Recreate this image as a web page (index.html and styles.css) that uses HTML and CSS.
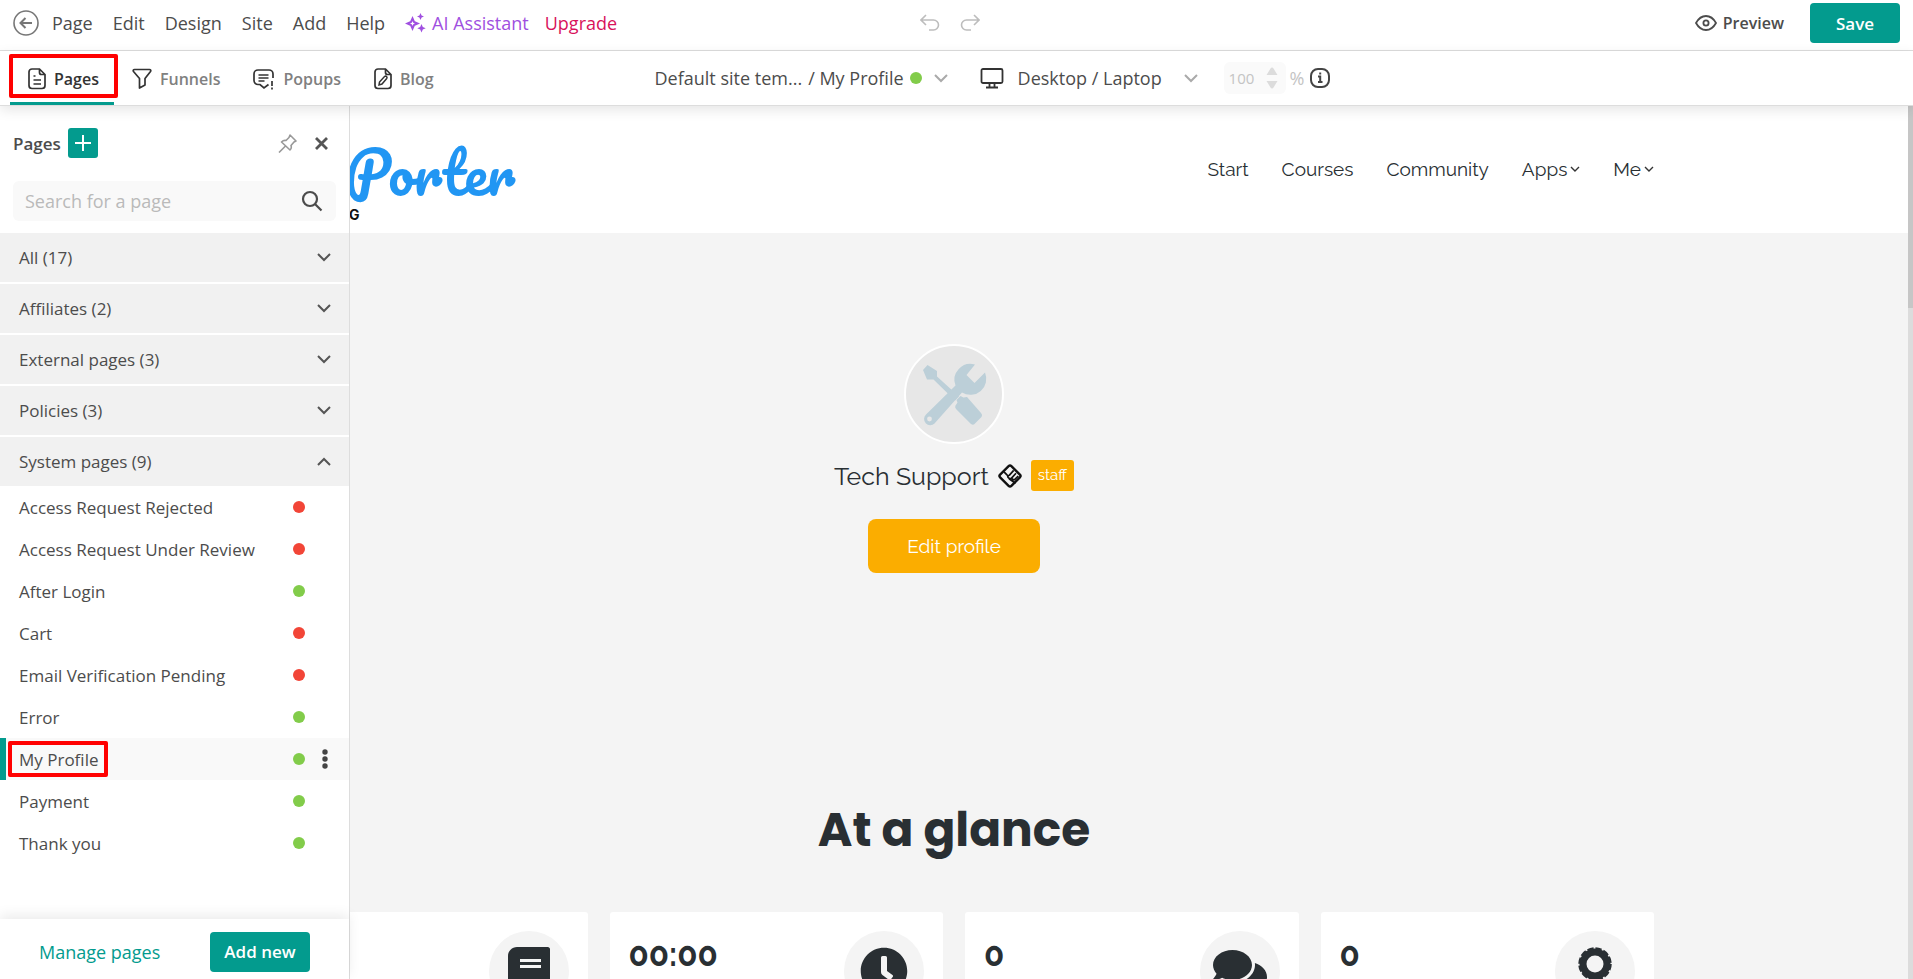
FILE: index.html
```html
<!DOCTYPE html>
<html lang="en">
<head>
  <meta charset="UTF-8" />
  <meta name="viewport" content="width=device-width, initial-scale=1.0"/>
  <title>Site Builder - My Profile</title>
  <link rel="stylesheet" href="styles.css">
</head>
<body>

  <header class="topbar">
    <nav class="menu" aria-label="Main menu">
      <button class="back-btn" aria-label="Back">
        <svg width="26" height="26" viewBox="0 0 26 26" fill="none" stroke="#777" stroke-width="2"><circle cx="13" cy="13" r="12" stroke-width="1.6"/><path d="M19 13H8M12.500 8L7.500 13l5 5"/></svg>
      </button>
      <button>Page</button>
      <button>Edit</button>
      <button>Design</button>
      <button>Site</button>
      <button>Add</button>
      <button>Help</button>
      <button class="ai-btn">
        <svg width="21" height="20" viewBox="0 0 21 20" fill="#a04fe0"><path d="M7.500 5.500L9 9l3.500 1.500L9 12l-1.500 3.500L6 12l-3.500-1.500L6 9z" fill="none" stroke="#a04fe0" stroke-width="2"/><path d="M15.500 0l1.100 2.400L19 3.500l-2.400 1.100L15.500 7l-1.100-2.400L12 3.500l2.400-1.100zM16.500 11l1.300 2.900 2.900 1.300-2.900 1.300-1.300 2.900-1.300-2.900-2.900-1.300 2.900-1.300z"/></svg>
        AI Assistant
      </button>
      <a href="#" class="upgrade">Upgrade</a>
    </nav>
    <div class="history">
      <button aria-label="Undo" disabled>
        <svg width="20" height="18" viewBox="0 0 20 18" fill="none" stroke="#bdbdbd" stroke-width="1.600"><path d="M6 1L1 6l5 5M1 6h12.500a5 5 0 0 1 0 10H9"/></svg>
      </button>
      <button aria-label="Redo" disabled>
        <svg width="20" height="18" viewBox="0 0 20 18" fill="none" stroke="#bdbdbd" stroke-width="1.600"><path d="M14 1l5 5-5 5M19 6H6.500a5 5 0 0 0 0 10H11"/></svg>
      </button>
    </div>
    <div class="actions">
      <button class="preview-btn">
        <svg width="22" height="16" viewBox="0 0 22 16" fill="none" stroke="#4c4c4c" stroke-width="1.800"><path d="M1 8c2.500-4.500 6-7 10-7s7.500 2.500 10 7c-2.500 4.500-6 7-10 7S3.500 12.500 1 8z"/><circle cx="11" cy="8" r="2.600"/></svg>
        Preview
      </button>
      <button class="btn save-btn">Save</button>
    </div>
  </header>

  <div class="toolbar">
    <nav class="tabs" aria-label="Panels">
      <button class="tab active marked">
        <svg width="18" height="22" viewBox="0 0 18 22" fill="none" stroke="#333" stroke-width="1.700"><path d="M11.500 1H4a3 3 0 0 0-3 3v13.500a3 3 0 0 0 3 3h10a3 3 0 0 0 3-3V6.500zM11.500 1v3.500a2 2 0 0 0 2 2H17M5.500 8h2M5.500 12h7.500M5.500 16h7.500"/></svg>
        Pages
      </button>
      <button class="tab">
        <svg width="20" height="21" viewBox="0 0 20 21" fill="none" stroke="#333" stroke-width="1.700" stroke-linejoin="round"><path d="M2.500 1.500h15c1.200 0 1.600 1 1 2l-5.500 7v6.500l-5.500 3V10.500l-6-7c-.6-1-.2-2 1-2z"/></svg>
        Funnels
      </button>
      <button class="tab">
        <svg width="22" height="22" viewBox="0 0 22 22" fill="none" stroke="#333" stroke-width="1.700"><path d="M15.500 16.500l-4.500 3.500-4-3.500H5a4 4 0 0 1-4-4V6a4 4 0 0 1 4-4h11a4 4 0 0 1 4 4v4M5.500 7h10M5.500 10h10M5.500 13h6M19 13v5M19 19.500v2"/></svg>
        Popups
      </button>
      <button class="tab">
        <svg width="18" height="22" viewBox="0 0 18 22" fill="none" stroke="#333" stroke-width="1.700"><path d="M11.500 1H4a3 3 0 0 0-3 3v13.500a3 3 0 0 0 3 3h10a3 3 0 0 0 3-3V6.500zM11.500 1v3.500a2 2 0 0 0 2 2H17"/><path d="M5 17l.5-3 5-5.500c1.500-1 3.200.5 2.200 2L8 16z" stroke-width="1.500"/></svg>
        Blog
      </button>
    </nav>

    <div class="view-controls">
      <button class="page-picker">
        <span>Default site tem...</span>
        <span>/ My Profile</span>
        <span class="dot green"></span>
        <svg class="chevron" width="14" height="9" viewBox="0 0 14 9" fill="none" stroke="#aaa" stroke-width="2"><path d="M1 1l6 6 6-6"/></svg>
      </button>
      <label class="device">
        <svg width="24" height="21" viewBox="0 0 24 21" fill="none" stroke="#333" stroke-width="1.800"><rect x="1.500" y="1" width="21" height="14" rx="1.500"/><path d="M9.500 15v4M14.500 15v4M6 19.500h12"/></svg>
        <select aria-label="Device">
          <option>Desktop / Laptop</option>
          <option>Tablet</option>
          <option>Mobile</option>
        </select>
        <svg width="14" height="9" viewBox="0 0 14 9" fill="none" stroke="#aaa" stroke-width="2"><path d="M1 1l6 6 6-6"/></svg>
      </label>
      <label class="zoom">
        <span class="zoom-field">
          <input type="number" value="100" aria-label="Zoom" disabled>
          <svg width="14" height="22" viewBox="0 0 14 22" fill="#dcdcdc"><path d="M5.500 1.500c.8-1.300 2.200-1.300 3 0L12.500 8H1.500zM5.500 20.500c.8 1.300 2.200 1.300 3 0L12.500 14H1.500z"/></svg>
        </span>
        %
      </label>
      <button class="info-btn" aria-label="Info">
        <svg width="20" height="20" viewBox="0 0 20 20" fill="none" stroke="#444" stroke-width="2"><rect x="1" y="1" width="18" height="18" rx="7"/><path d="M8 8.500h2.200V14M8 14h4.500M9.200 5.500h2"/></svg>
      </button>
    </div>
  </div>

  <div class="workspace">
    <!-- Site canvas, runs under the side panel -->
    <main class="canvas">
      <div class="site-header">
        <div class="site-wrap">
          <a href="#" class="logo">
            <span class="logo-name">Porter</span>
            <span class="logo-tag">G</span>
          </a>
          <nav class="site-nav" aria-label="Site">
            <a href="#">Start</a>
            <a href="#">Courses</a>
            <a href="#">Community</a>
            <a href="#">Apps <svg width="10" height="9" viewBox="0 0 10 9" fill="none" stroke="#333" stroke-width="1.400"><path d="M1 3l4 4 4-4"/></svg></a>
            <a href="#">Me <svg width="10" height="9" viewBox="0 0 10 9" fill="none" stroke="#333" stroke-width="1.400"><path d="M1 3l4 4 4-4"/></svg></a>
          </nav>
        </div>
      </div>

      <section class="profile">
        <svg class="avatar" viewBox="0 0 96 96" role="img" aria-label="Tools">
          <g fill="#bccfd8">
            <path d="M17 24l4.500-5 9.500 6v5.500l22 20-4 4-21.500-21H21z"/>
            <path d="M49.500 59.500l2-3-1-2.500 4-4 3 1.500 3.500-.5L75 67q2 2 .5 4l-7 7q-1.500 1.500-3.500 0L50 63q-1.500-2-.5-3.500z"/>
            <path d="M69 18.500a16 16 0 0 0-19.500 21L20 68.500a6 6 0 0 0 8.500 9L56 46.500a16 16 0 0 0 23-20L68.500 37l-8-8z"/>
          </g>
          <circle cx="23.500" cy="73" r="2.400" fill="#e7e7e7"/>
        </svg>
        <div class="profile-name">
          <h2>Tech Support</h2>
          <svg width="24" height="24" viewBox="0 0 26 26" fill="none" stroke="#111" stroke-width="2.600" stroke-linejoin="round"><path d="M11.500 2.300L2.300 11.500q-1.500 1.500 0 3l9.200 9.200q1.500 1.500 3 0l9.200-9.200q1.500-1.500 0-3L14.500 2.300q-1.500-1.500-3 0z"/><path d="M6.500 8.500l3.500 3.500q1.200 1 2.400 0L17 7M10.500 13q0 1.500 1.500 2.500 1.200 1 2.400 0L19.500 10M12 16l7 5M15 15.500q1.500 2.500 3.500 1L22 13" stroke-width="1.900"/></svg>
          <span class="badge">staff</span>
        </div>
        <button class="edit-btn">Edit profile</button>
      </section>

      <section class="glance">
        <h1>At a glance</h1>
        <div class="cards">
          <div class="card">
            <span class="card-icon">
              <svg width="42" height="48" viewBox="0 0 448 512" fill="#292f33"><path fill-rule="evenodd" d="M448 360V24c0-13.300-10.700-24-24-24H96C43 0 0 43 0 96v320c0 53 43 96 96 96h328c13.300 0 24-10.700 24-24v-16c0-7.500-3.500-14.300-8.900-18.700-4.200-15.400-4.200-59.300 0-74.700 5.400-4.300 8.900-11.100 8.900-18.600zM128 128h224v32H128zm0 64h224v32H128z"/></svg>
            </span>
          </div>
          <div class="card">
            <strong>00:00</strong>
            <span class="card-icon">
              <svg width="48" height="48" viewBox="0 0 512 512" fill="#292f33"><path d="M256,8C119,8,8,119,8,256S119,504,256,504,504,393,504,256,393,8,256,8Zm92.490,313h0l-20,25a16,16,0,0,1-22.490,2.500h0l-67-49.720a40,40,0,0,1-15-31.230V112a16,16,0,0,1,16-16h32a16,16,0,0,1,16,16V256l58,42.500A16,16,0,0,1,348.490,321Z"/></svg>
            </span>
          </div>
          <div class="card">
            <strong>0</strong>
            <span class="card-icon">
              <svg width="54" height="48" viewBox="0 0 576 512" fill="#292f33"><path d="M416 192c0-88.400-93.100-160-208-160S0 103.600 0 192c0 34.300 14.100 65.900 38 92-13.400 30.200-35.500 54.200-35.800 54.500-2.200 2.300-2.800 5.700-1.500 8.700S4.800 352 8 352c36.600 0 66.900-12.300 88.700-25 32.200 15.700 70.300 25 111.300 25 114.900 0 208-71.600 208-160zm122 220c23.900-26 38-57.700 38-92 0-66.900-53.500-124.200-129.300-148.100.9 6.600 1.300 13.300 1.300 20.100 0 105.900-107.700 192-240 192-10.800 0-21.300-.8-31.700-1.900C207.800 439.600 281.800 480 368 480c41 0 79.100-9.200 111.300-25 21.800 12.700 52.100 25 88.700 25 3.200 0 6.100-1.900 7.300-4.800 1.300-2.900.7-6.300-1.500-8.700-.3-.3-22.400-24.200-35.800-54.500z"/></svg>
            </span>
          </div>
          <div class="card">
            <strong>0</strong>
            <span class="card-icon">
              <svg width="36" height="48" viewBox="0 0 36 48" fill="none" stroke="#292f33"><circle cx="18" cy="17" r="12" stroke-width="7"/><circle cx="18" cy="17" r="15" stroke-width="3.500" stroke-dasharray="6 1.854"/><path d="M9 32L4 43l7-1 4 5 3-10 3 10 4-5 7 1-5-11" fill="#292f33" stroke="none"/></svg>
            </span>
          </div>
        </div>
      </section>
    </main>

    <aside class="panel">
      <div class="panel-head">
        <h3>Pages</h3>
        <button class="add-btn" aria-label="Add page">
          <svg width="18" height="18" viewBox="0 0 18 18" stroke="#fff" stroke-width="2"><path d="M9 1v16M1 9h16"/></svg>
        </button>
        <button class="pin-btn" aria-label="Pin panel">
          <svg width="19" height="19" viewBox="0 0 19 19" fill="none" stroke="#999" stroke-width="1.600" stroke-linejoin="round"><path d="M12 1l6 6-2 1-3 3.500c.6 1.800.3 3.400-1 4.500L3.500 8C5 6.500 6.500 6.200 8 6.500L11 3.500zM7.500 12L1 18.500"/></svg>
        </button>
        <button class="close-btn" aria-label="Close panel">
          <svg width="13" height="13" viewBox="0 0 13 13" stroke="#555" stroke-width="2.800"><path d="M1 1l11 11M12 1L1 12"/></svg>
        </button>
      </div>

      <label class="search">
        <input type="text" placeholder="Search for a page" aria-label="Search for a page">
        <svg width="22" height="22" viewBox="0 0 22 22" fill="none" stroke="#4c4c4c" stroke-width="2.200"><circle cx="9" cy="9" r="7"/><path d="M14 14l6.500 6.500"/></svg>
      </label>

      <div class="groups">
        <button class="group">All (17) <svg width="14" height="9" viewBox="0 0 14 9" fill="none" stroke="#555" stroke-width="2"><path d="M1 1l6 6 6-6"/></svg></button>
        <button class="group">Affiliates (2) <svg width="14" height="9" viewBox="0 0 14 9" fill="none" stroke="#555" stroke-width="2"><path d="M1 1l6 6 6-6"/></svg></button>
        <button class="group">External pages (3) <svg width="14" height="9" viewBox="0 0 14 9" fill="none" stroke="#555" stroke-width="2"><path d="M1 1l6 6 6-6"/></svg></button>
        <button class="group">Policies (3) <svg width="14" height="9" viewBox="0 0 14 9" fill="none" stroke="#555" stroke-width="2"><path d="M1 1l6 6 6-6"/></svg></button>
        <button class="group" aria-expanded="true">System pages (9) <svg width="14" height="9" viewBox="0 0 14 9" fill="none" stroke="#555" stroke-width="2"><path d="M1 8l6-6 6 6"/></svg></button>
      </div>

      <ul class="page-list">
        <li><a href="#">Access Request Rejected</a><span class="dot red"></span></li>
        <li><a href="#">Access Request Under Review</a><span class="dot red"></span></li>
        <li><a href="#">After Login</a><span class="dot green"></span></li>
        <li><a href="#">Cart</a><span class="dot red"></span></li>
        <li><a href="#">Email Verification Pending</a><span class="dot red"></span></li>
        <li><a href="#">Error</a><span class="dot green"></span></li>
        <li class="current">
          <a href="#" class="marked">My Profile</a><span class="dot green"></span>
          <button class="more-btn" aria-label="More options">
            <svg width="6" height="20" viewBox="0 0 6 20" fill="#444"><circle cx="3" cy="3" r="2.700"/><circle cx="3" cy="10" r="2.700"/><circle cx="3" cy="17" r="2.700"/></svg>
          </button>
        </li>
        <li><a href="#">Payment</a><span class="dot green"></span></li>
        <li><a href="#">Thank you</a><span class="dot green"></span></li>
      </ul>

      <div class="panel-foot">
        <a href="#">Manage pages</a>
        <button class="btn">Add new</button>
      </div>
    </aside>

    <div class="scrollbar"><div class="thumb"></div></div>
  </div>

</body>
</html>
```
FILE: styles.css
```css
* {
  box-sizing: border-box;
  margin: 0;
  padding: 0;
}

body {
  display: flex;
  flex-direction: column;
  height: 100vh;
  overflow: hidden;
  background: #fff;
  color: #4c4c4c;
  font-family: 'Segoe UI', 'Open Sans', sans-serif;
  font-size: 17px;
}

button,
input,
select {
  font: inherit;
  color: inherit;
  background: none;
  border: none;
}

button {
  cursor: pointer;
}

a {
  color: inherit;
  text-decoration: none;
}

svg {
  display: block;
  flex: none;
}

.btn {
  height: 40px;
  background: #039b8e;
  color: #fff;
  border-radius: 4px;
  font-size: 17px;
  font-weight: 600;
}

.dot {
  width: 12px;
  height: 12px;
  border-radius: 50%;
}

.dot.green {
  background: #82cc4a;
}

.dot.red {
  background: #f24537;
}

/* Top bar */
.topbar {
  display: grid;
  grid-template-columns: 1fr auto 1fr;
  align-items: center;
  height: 51px;
  padding: 0 13px 4px;
  border-bottom: 1px solid #ddd;
}

.menu {
  display: flex;
  align-items: center;
  gap: 20px;
  font-size: 18px;
}

.back-btn {
  margin-right: -7px;
}

.ai-btn {
  display: flex;
  align-items: center;
  gap: 6px;
  color: #a04fe0;
}

.upgrade {
  color: #d8125b;
  margin-left: -4px;
}

.history {
  display: flex;
  gap: 20px;
  margin-right: 14px;
}

.actions {
  display: flex;
  justify-content: flex-end;
  align-items: center;
  gap: 26px;
}

.preview-btn {
  display: flex;
  align-items: center;
  gap: 6px;
  font-weight: 600;
  font-size: 16px;
}

.save-btn {
  width: 90px;
}

/* Toolbar */
.toolbar {
  display: grid;
  grid-template-columns: 1fr auto 1fr;
  height: 55px;
  padding: 0 10px;
  border-bottom: 1px solid #ddd;
  box-shadow: 0 4px 12px rgba(0, 0, 0, 0.1);
  position: relative;
  z-index: 3;
  background: #fff;
}

.tabs {
  display: flex;
}

.tab {
  display: flex;
  align-items: center;
  gap: 8px;
  padding: 4px 15px 0 18px;
  border-bottom: 3px solid transparent;
  color: #808080;
  font-size: 16px;
  font-weight: 600;
}

.tab.active {
  color: #333;
  border-bottom-color: #039b8e;
}

/* Red highlight frame */
.marked {
  position: relative;
}

.marked::after {
  content: "";
  position: absolute;
  inset: 3px -4px 4px -1px;
  border: 4px solid #f00;
  border-radius: 2px;
}

.view-controls {
  display: flex;
  align-items: center;
  padding-left: 72px;
  font-size: 18px;
}

.page-picker {
  display: flex;
  align-items: center;
  gap: 6px;
}

.chevron {
  margin-left: 6px;
}

.device {
  display: flex;
  align-items: center;
  gap: 14px;
  margin: 0 26px 0 32px;
}

.device select {
  appearance: none;
  width: 152px;
}

.zoom {
  display: flex;
  align-items: center;
  gap: 4px;
  color: #c4c4c4;
}

.zoom-field {
  display: flex;
  align-items: center;
  width: 62px;
  height: 32px;
  padding: 0 7px 0 5px;
  background: #fafafa;
  border-radius: 6px;
  font-size: 15px;
}

.zoom-field input {
  width: 36px;
  appearance: textfield;
}

.zoom-field input::-webkit-inner-spin-button {
  display: none;
}

.info-btn {
  margin-left: 6px;
}

/* Workspace */
.workspace {
  flex: 1;
  min-height: 0;
  display: grid;
  grid-template-columns: 1fr 5px;
  grid-template-rows: 100%;
}

.canvas {
  grid-area: 1 / 1;
  overflow: hidden;
  background: #f4f4f4;
  color: #292f33;
  font-family: Raleway, Lato, sans-serif;
}

.scrollbar {
  grid-area: 1 / 2;
  background: #dcdcdc;
}

.thumb {
  height: 202px;
  background: #c6c6c6;
}

.site-header {
  background: #fff;
}

.site-wrap {
  display: flex;
  justify-content: space-between;
  align-items: center;
  max-width: 1400px;
  height: 127px;
  margin: 0 auto;
}

.logo {
  display: flex;
  flex-direction: column;
  padding: 14px 0 0 91px;
}

.logo-name {
  color: #2196f3;
  font-family: Pacifico, Lato, cursive;
  font-size: 57px;
  line-height: 76px;
}

.logo-tag {
  color: #111;
  font-family: Inter, sans-serif;
  font-size: 14px;
  line-height: 10px;
  font-weight: 700;
  padding-left: 4px;
}

.site-nav {
  display: flex;
  gap: 33px;
  padding-bottom: 2px;
  font-size: 19px;
}

.site-nav a {
  display: flex;
  align-items: center;
  gap: 3px;
}

/* Profile */
.profile {
  display: flex;
  flex-direction: column;
  align-items: center;
  padding-top: 111px;
}

.avatar {
  width: 100px;
  height: 100px;
  border: 2px solid #fff;
  border-radius: 50%;
  background: #e7e7e7;
}

.profile-name {
  display: flex;
  align-items: center;
  gap: 9px;
  margin: 16px 0 28px;
}

.profile-name h2 {
  font-size: 25px;
  font-weight: 400;
}

.badge {
  background: #fbad00;
  color: #fff;
  border-radius: 3px;
  padding: 0 7px;
  font-size: 15px;
  line-height: 31px;
}

.edit-btn {
  width: 172px;
  height: 54px;
  background: #fbad00;
  color: #fff;
  border-radius: 8px;
  font-size: 19px;
}

/* Stats */
.glance {
  padding-top: 221px;
}

.glance h1 {
  text-align: center;
  font-family: Poppins, Inter, sans-serif;
  font-size: 47px;
  line-height: 72px;
  font-weight: 700;
}

.cards {
  display: grid;
  grid-template-columns: repeat(4, 1fr);
  gap: 22px;
  max-width: 1400px;
  margin: 46px auto 0;
}

.card {
  display: flex;
  height: 160px;
  padding: 19px;
  background: #fff;
  border-radius: 3px;
}

.card strong {
  font-size: 33px;
  line-height: 48px;
  font-weight: 700;
}

.card-icon {
  display: flex;
  align-items: center;
  justify-content: center;
  width: 80px;
  height: 80px;
  margin-left: auto;
  border-radius: 50%;
  background: #f4f4f4;
}

/* Side panel */
.panel {
  grid-area: 1 / 1;
  z-index: 2;
  display: flex;
  flex-direction: column;
  width: 350px;
  background: #fff;
  border-right: 1px solid #ddd;
}

.panel-head {
  display: flex;
  align-items: center;
  padding: 22px 21px 0 13px;
}

.panel-head h3 {
  font-size: 17px;
  font-weight: 600;
}

.add-btn {
  display: flex;
  align-items: center;
  justify-content: center;
  width: 30px;
  height: 30px;
  margin-left: 7px;
  background: #039b8e;
  border-radius: 3px;
}

.pin-btn {
  margin-left: auto;
  margin-right: 18px;
}

.search {
  display: flex;
  align-items: center;
  height: 40px;
  margin: 23px 13px 12px;
  padding: 0 13px 0 12px;
  background: #f9f9f9;
  border-radius: 6px;
}

.search input {
  flex: 1;
  min-width: 0;
  font-size: 18px;
}

.search input::placeholder {
  color: #bababa;
}

.groups {
  display: flex;
  flex-direction: column;
  gap: 2px;
}

.group {
  display: flex;
  align-items: center;
  justify-content: space-between;
  height: 49px;
  padding: 0 18px 0 19px;
  background: #f1f1f1;
}

.page-list {
  flex: 1;
  list-style: none;
}

.page-list li {
  display: flex;
  align-items: center;
  height: 42px;
  padding: 0 44px 0 19px;
}

.page-list .dot {
  margin-left: auto;
}

.page-list .current {
  padding-left: 13px;
  padding-right: 21px;
  border-left: 6px solid #039b8e;
  background: #f9f9f9;
}

.page-list .marked::after {
  inset: -7px -10px -6px -11px;
}

.more-btn {
  margin-left: 17px;
}

.panel-foot {
  display: flex;
  align-items: center;
  justify-content: space-between;
  height: 60px;
  padding: 8px 39px 3px;
  color: #039b8e;
  font-size: 18px;
  box-shadow: 0 -4px 12px rgba(0, 0, 0, 0.08);
}

.panel-foot .btn {
  width: 100px;
}
```
